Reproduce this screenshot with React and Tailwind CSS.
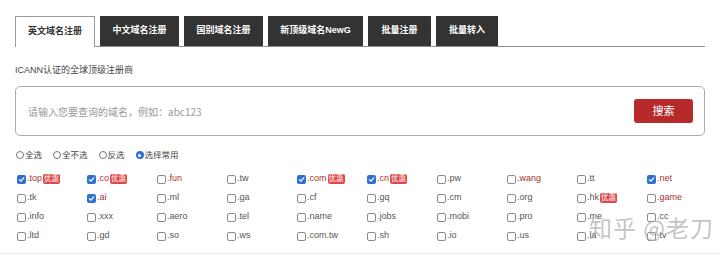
import React, { useState } from "react";

const tabs = [
  { label: "英文域名注册", w: "w-[80px]" },
  { label: "中文域名注册", w: "w-[79px]" },
  { label: "国别域名注册", w: "w-[79px]" },
  { label: "新顶级域名NewG", w: "w-[95px]" },
  { label: "批量注册", w: "w-[63px]" },
  { label: "批量转入", w: "w-[62px]" },
];

const radios = ["全选", "全不选", "反选", "选择常用"];

// [name, checked, red, badge]
const domains = [
  [".top", true, true, true],
  [".co", true, true, true],
  [".fun", false, true, false],
  [".tw", false, false, false],
  [".com", true, true, true],
  [".cn", true, true, true],
  [".pw", false, false, false],
  [".wang", false, true, false],
  [".tt", false, false, false],
  [".net", true, true, false],
  [".tk", false, false, false],
  [".ai", true, true, false],
  [".ml", false, false, false],
  [".ga", false, false, false],
  [".cf", false, false, false],
  [".gq", false, false, false],
  [".cm", false, false, false],
  [".org", false, false, false],
  [".hk", false, false, true],
  [".game", false, true, false],
  [".info", false, false, false],
  [".xxx", false, false, false],
  [".aero", false, false, false],
  [".tel", false, false, false],
  [".name", false, false, false],
  [".jobs", false, false, false],
  [".mobi", false, false, false],
  [".pro", false, false, false],
  [".me", false, false, false],
  [".cc", false, false, false],
  [".ltd", false, false, false],
  [".gd", false, false, false],
  [".so", false, false, false],
  [".ws", false, false, false],
  [".com.tw", false, false, false],
  [".sh", false, false, false],
  [".io", false, false, false],
  [".us", false, false, false],
  [".la", false, false, false],
  [".tv", false, false, false],
];

function Check({ on }) {
  if (on) {
    return (
      <span className="w-[9px] h-[9px] rounded-[2px] bg-[#2f6fd6] flex items-center justify-center shrink-0">
        <svg width="7" height="7" viewBox="0 0 10 10">
          <path d="M2 5.2 L4.2 7.4 L8.2 2.6" fill="none" stroke="#fff" strokeWidth="1.8" strokeLinecap="round" strokeLinejoin="round" />
        </svg>
      </span>
    );
  }
  return <span className="w-[9px] h-[9px] rounded-[2px] border border-[#8a8a8a] bg-white shrink-0" />;
}

export default function App() {
  const [tab] = useState(0);
  const [pick] = useState(3);

  return (
    <div
      className="relative w-[720px] h-[259px] bg-white overflow-hidden text-[#555]"
      style={{ fontFamily: '"Liberation Sans", "Noto Sans CJK SC", sans-serif' }}
    >
      <div className="pt-4 px-[15px]">
        <div className="flex items-end gap-[5px] border-b border-[#8c8c8c] h-[31px]">
          {tabs.map((t, i) =>
            i === tab ? (
              <div
                key={t.label}
                className={`${t.w} h-[31px] -mb-px bg-white border border-b-0 border-[#9a9a9a] flex items-center justify-center text-[9px] font-semibold text-[#333]`}
              >
                {t.label}
              </div>
            ) : (
              <div
                key={t.label}
                className={`${t.w} h-[30px] bg-[#333] flex items-center justify-center text-[9px] font-semibold text-white`}
              >
                {t.label}
              </div>
            )
          )}
        </div>

        <div className="mt-[18px] text-[9px] leading-[10px] text-[#444]">ICANN认证的全球顶级注册商</div>

        <div className="mt-[11px] h-[50px] border border-[#ababab] rounded-[5px] flex items-center justify-between pl-[12px] pr-[11px]">
          <span className="text-[10px] text-[#999]" style={{ fontFamily: '"Noto Sans CJK SC", sans-serif' }}>
            请输入您要查询的域名，例如：abc123
          </span>
          <button className="w-[59px] h-[24px] rounded-[3px] bg-[#b62a2a] text-white text-[11px] flex items-center justify-center">
            搜索
          </button>
        </div>

        <div className="mt-[14px] flex items-center text-[8.5px] leading-[10px] text-[#444]">
          {radios.map((r, i) => (
            <div key={r} className={`flex items-center ${i === 0 ? "ml-[1px]" : "ml-[11px]"}`}>
              {i === pick ? (
                <span className="w-[8px] h-[8px] rounded-full bg-[#2f6fd6] flex items-center justify-center">
                  <span className="w-[3px] h-[3px] rounded-full bg-white" />
                </span>
              ) : (
                <span className="w-[8px] h-[8px] rounded-full border border-[#777] bg-white" />
              )}
              <span className="ml-[1px]">{r}</span>
            </div>
          ))}
        </div>

        <div className="mt-[14px] ml-[2px] grid grid-cols-10 gap-y-[9px] w-[700px]">
          {domains.map(([name, on, red, badge]) => (
            <div key={name} className="flex items-center h-[10px] text-[9px]">
              <Check on={on} />
              <span className={`ml-[1px] ${red ? "text-[#a8322f]" : "text-[#555]"}`}>{name}</span>
              {badge && (
                <span className="ml-[1px] px-[1px] h-[10px] rounded-[2px] bg-[#e04848] text-white text-[7.5px] leading-[10px]">
                  优惠
                </span>
              )}
            </div>
          ))}
        </div>
      </div>

      <div className="absolute left-0 right-0 top-[253px] h-px bg-[#ececec]" />

      <div
        className="absolute left-[589px] top-[210px] text-[23px] text-[#aaa]/70 tracking-[1px]"
        style={{ fontFamily: '"Noto Sans CJK SC", sans-serif' }}
      >
        知乎 @老刀
      </div>
    </div>
  );
}
